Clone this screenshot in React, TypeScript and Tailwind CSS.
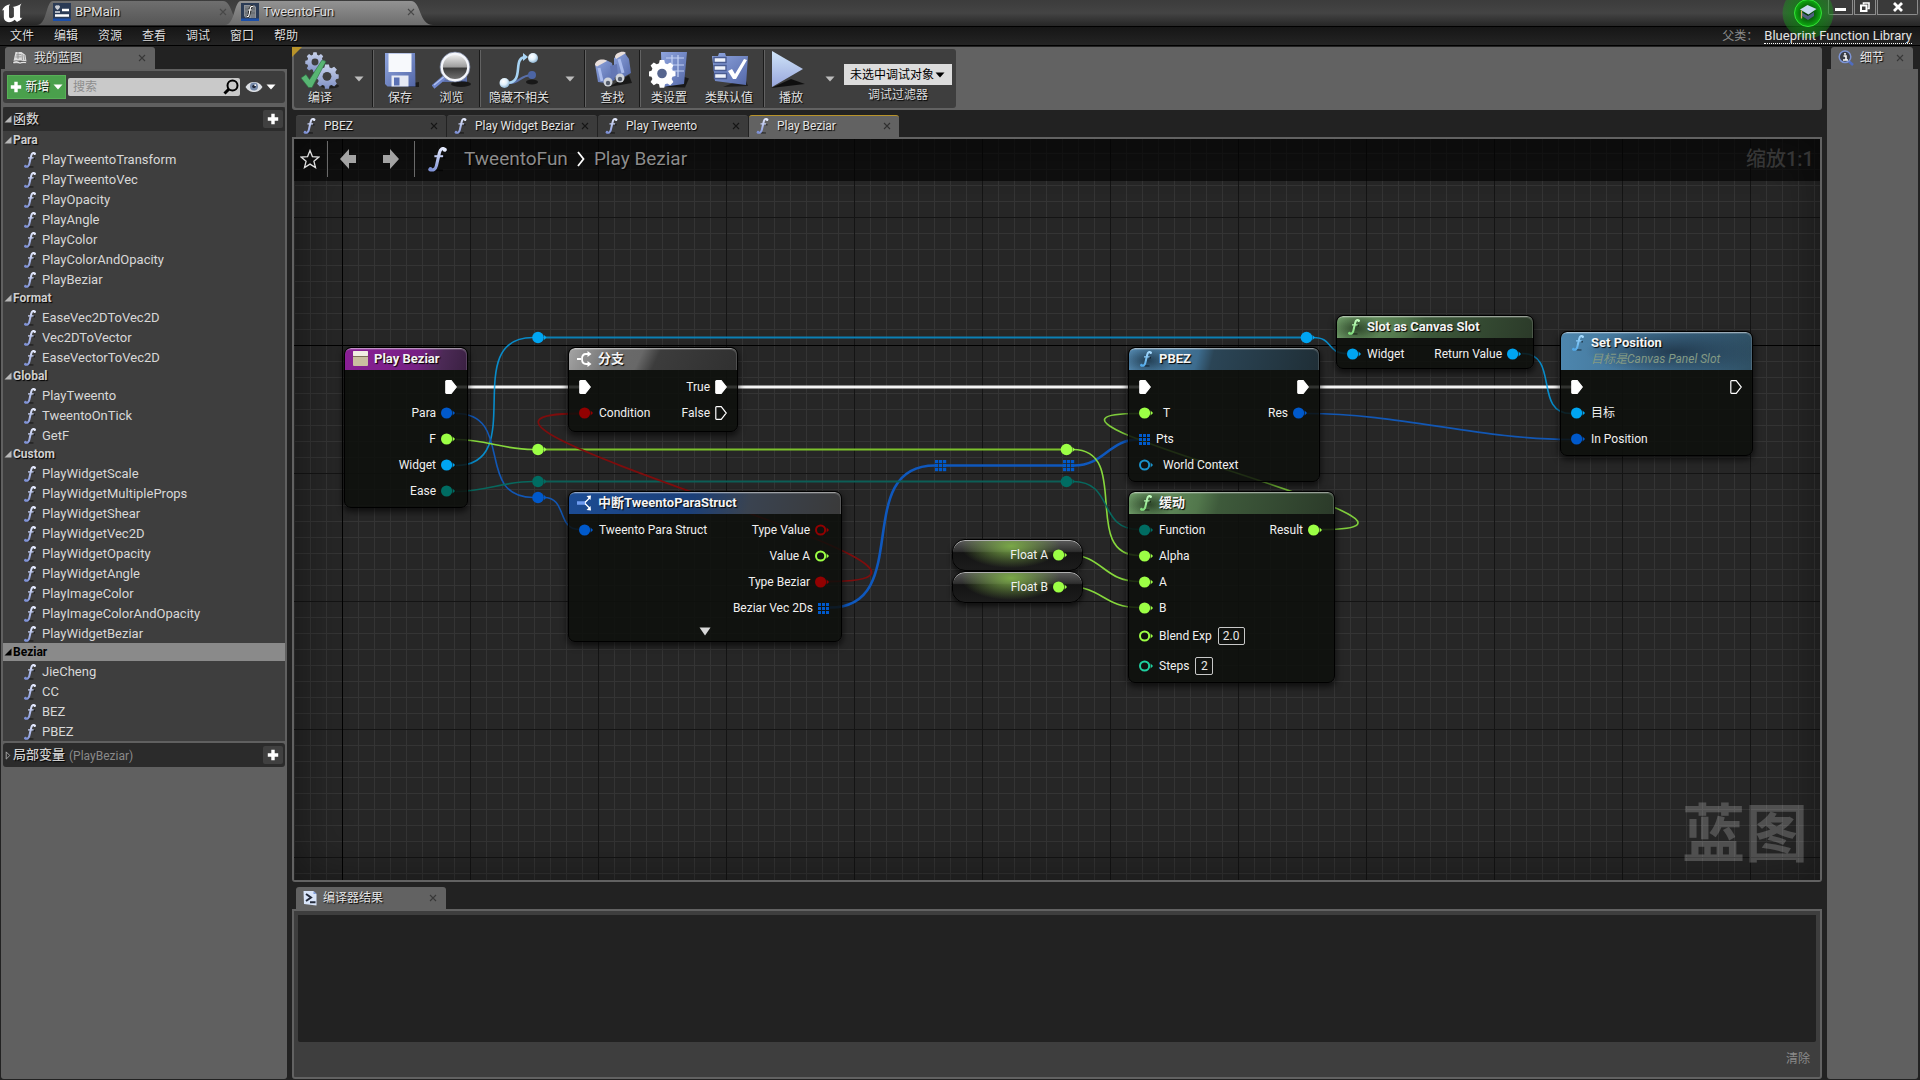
import type { ReactNode } from "react";

const SHADOW = "[text-shadow:1px_1px_1px_#000]";

/* ---------- icons ---------- */

function FIcon({ className = "h-4 w-3", from = "#e8edff", to = "#7d90d6" }: { className?: string; from?: string; to?: string }) {
  const id = "f" + from.slice(1) + to.slice(1);
  return (
    <svg viewBox="0 0 12 16" className={className + " shrink-0"} fill="none" aria-hidden="true">
      <defs>
        <linearGradient id={id} x1="0" y1="0" x2="0" y2="16" gradientUnits="userSpaceOnUse">
          <stop offset="0" stopColor={from} />
          <stop offset="1" stopColor={to} />
        </linearGradient>
      </defs>
      <path d="M4.5 14.8l5 .2M9 6.6l2 .3" stroke="#000" strokeOpacity=".6" strokeWidth="1.2" />
      <path d="M10.9 1.6C9.4.3 7.8 1.2 7.2 3.8L5.3 12c-.5 2.1-1.9 3.2-4.2 2.5" stroke={`url(#${id})`} strokeWidth="2" strokeLinecap="round" />
      <path d="M4 5.9h5.6" stroke={`url(#${id})`} strokeWidth="1.3" />
      <circle cx="10.6" cy="2" r="1.1" fill={from} />
      <circle cx="1.5" cy="14" r="1.2" fill={to} />
    </svg>
  );
}

const Close = ({ className = "" }: { className?: string }) => (
  <svg viewBox="0 0 8 8" className={"h-2 w-2 shrink-0 " + className} aria-hidden="true">
    <path d="M1 1l6 6M7 1L1 7" stroke="currentColor" strokeWidth="1.1" />
  </svg>
);

const Caret = ({ className = "" }: { className?: string }) => (
  <svg viewBox="0 0 10 6" className={"h-[6px] w-[10px] shrink-0 " + className} aria-hidden="true">
    <path d="M.5.5h9L5 5.5z" fill="currentColor" />
  </svg>
);

const Plus = () => (
  <svg viewBox="0 0 12 12" className="h-3 w-3 shrink-0" aria-hidden="true">
    <path d="M4.3.8h3.4v3.5h3.500v3.400H7.700v3.500H4.300V7.700H.8V4.300h3.500z" fill="#fff" />
  </svg>
);

const Logo = () => (
  <svg viewBox="0 0 24 22" className="mt-[3px] h-[20px] w-[24px] shrink-0" aria-label="Unreal">
    <path
      d="M1 8.500C2.500 4.500 5.500 1.800 10 1.300c-1 1-1.300 2-1.300 3.200v10c0 1.400.8 2.200 2 2.200 1.500 0 2.600-.8 3.400-1.800V6c0-1-.4-1.500-1.400-1.700C16 3.800 20 2.500 22.500.5c-1 1.600-1.600 2.600-1.600 4.500v10c0 1 .5 1.500 1.200 1.500.5 0 1-.3 1.400-.7-1.200 2.600-3.500 4.200-6 5l-2.600-2.400c-1.700 1.700-3.600 2.700-6.200 2.700C5.500 21.100 3 19 3 15.800V8.500c0-.8-.8-1-2 0z"
      fill="#fff"
    />
  </svg>
);

const WidgetIcon = () => (
  <svg viewBox="0 0 18 18" className="h-[18px] w-[18px] shrink-0" aria-hidden="true">
    <rect width="18" height="18" fill="#2b3b55" />
    <rect y="15.500" width="18" height="2.500" fill="#1c4fa8" />
    <path d="M4.500 2.500c1.200-1 2.500.2 2.500 1.300C7 5.300 4.500 7 4.500 7S2 5.300 2 3.800c0-1.100 1.400-2.300 2.500-1.300z" fill="#c9cdd4" />
    <path d="M9 7h7M2 12.500h14" stroke="#fff" strokeWidth="2.600" />
    <path d="M2 9h5" stroke="#dfe3ea" strokeWidth="1.600" />
  </svg>
);

const LibraryIcon = () => (
  <svg viewBox="0 0 18 18" className="h-[18px] w-[18px] shrink-0" aria-hidden="true">
    <rect width="18" height="18" fill="#2b3b55" />
    <rect y="15.500" width="18" height="2.500" fill="#1c4fa8" />
    <path d="M3 2h10l2 2v11H5l-2-2z" fill="#8e9298" />
    <path d="M5 3v11M7 3v11M13 4v11M11 4v11M4 6h10M4 10h10" stroke="#5c6066" strokeWidth=".8" />
    <path d="M12 3.500c-2-.8-2.600 1-3 3L8 12c-.3 1.400-1 2-2.300 1.600M7 7h4" stroke="#111" strokeWidth="2.600" fill="none" />
    <path d="M12 3.500c-2-.8-2.600 1-3 3L8 12c-.3 1.400-1 2-2.300 1.600M7 7h4" stroke="#fff" strokeWidth="1.200" fill="none" />
  </svg>
);

const BookIcon = () => (
  <svg viewBox="0 0 16 14" className="h-[14px] w-4 shrink-0" aria-hidden="true">
    <path d="M1.500 10l2-9h6l4 3 1 6.500-6-1z" fill="#dcdcdc" />
    <path d="M4 4l5-.5M3.500 6l6-.2M6 1v7M10 3l.5 6M12 4l.8 5" stroke="#7c7c7c" strokeWidth=".7" />
    <path d="M1 10.500c2.500-1 5-.8 7 .8 2-1 4-1.200 6.500-.3v1.700c-2.500-.7-4.500-.5-6.500.3-2-1-4.500-1.200-7-.3z" fill="#f2f2f2" stroke="#222" strokeWidth=".4" />
  </svg>
);

const SearchIcon = () => (
  <svg viewBox="0 0 16 16" className="h-4 w-4 shrink-0" fill="none" aria-hidden="true">
    <circle cx="9.500" cy="6.500" r="5" stroke="#000" strokeWidth="2" />
    <path d="M6 10l-4.500 4.500" stroke="#000" strokeWidth="3" />
  </svg>
);

const EyeIcon = () => (
  <svg viewBox="0 0 18 12" className="h-3 w-[18px] shrink-0" aria-hidden="true">
    <path d="M.5 6C3 2 6 1 9 1s6 1 8.500 5C15 10 12 11 9 11S3 10 .5 6z" fill="#dcdfe4" />
    <circle cx="9" cy="5.500" r="4" fill="#7488a8" />
    <circle cx="9" cy="5.500" r="1.800" fill="#20283a" />
    <circle cx="10.200" cy="4.200" r=".9" fill="#fff" />
  </svg>
);

const GEAR =
  "M-1.500-8h3l.5 2.200 1.500.6 2-1.200 2.100 2.100-1.200 2 .6 1.500L9-.3v3l-2 .5-.6 1.500 1.200 2-2.100 2.100-2-1.200-1.500.6-.5 2.300h-3l-.5-2.300-1.500-.6-2 1.200-2.100-2.100 1.200-2-.6-1.500L-9 2.700v-3l2-.5.6-1.500-1.200-2 2.100-2.100 2 1.200 1.500-.6z";

const Defs = () => (
  <svg className="absolute h-0 w-0" aria-hidden="true">
    <defs>
      <linearGradient id="steel" x1="0" y1="0" x2="0" y2="1">
        <stop offset="0" stopColor="#c9d3ec" />
        <stop offset="1" stopColor="#7f90c4" />
      </linearGradient>
      <linearGradient id="blue" x1="0" y1="0" x2="1" y2="1">
        <stop offset="0" stopColor="#8fa5de" />
        <stop offset="1" stopColor="#5468a8" />
      </linearGradient>
      <linearGradient id="ice" x1="0" y1="0" x2="0" y2="1">
        <stop offset="0" stopColor="#cfe4f8" />
        <stop offset="1" stopColor="#98a6dc" />
      </linearGradient>
      <linearGradient id="lens" x1="0" y1="0" x2="0" y2="1">
        <stop offset="0" stopColor="#f4f4f4" />
        <stop offset=".5" stopColor="#9c9c9c" />
        <stop offset=".54" stopColor="#3a3a3a" />
        <stop offset="1" stopColor="#777" />
      </linearGradient>
      <radialGradient id="ball" cx=".4" cy=".35" r=".7">
        <stop offset="0" stopColor="#fff" />
        <stop offset=".5" stopColor="#dff0fc" />
        <stop offset="1" stopColor="#7fa8c8" />
      </radialGradient>
    </defs>
  </svg>
);

const Big = ({ children }: { children: ReactNode }) => (
  <svg viewBox="0 0 40 40" className="h-10 w-10" fill="none" aria-hidden="true">
    {children}
  </svg>
);

const CompileIcon = () => (
  <Big>
    <ellipse cx="30" cy="36" rx="9" ry="2.500" fill="#000" opacity=".5" />
    <g transform="translate(15 11) scale(1.080)">
      <path d={GEAR} fill="url(#steel)" />
      <circle cx="0" cy="1" r="3.200" fill="#3e3e3e" />
    </g>
    <g transform="translate(27 25) scale(1.300)">
      <path d={GEAR} fill="url(#steel)" />
      <circle cx="0" cy="1" r="3.400" fill="#3e3e3e" />
    </g>
    <path d="M1 28l5-3.500 3.500 5L22 10l4 1.500L12 37.500H8.500z" fill="#58b573" stroke="#2c6b40" strokeWidth=".6" />
  </Big>
);

const SaveIcon = () => (
  <Big>
    <path d="M10 37h29v-5z" fill="#000" opacity=".55" />
    <path d="M5 3h30l.5 33.500H7.500L5 34z" fill="url(#blue)" />
    <path d="M8.500 3.500h23V22h-23z" fill="#f7f9fc" />
    <path d="M11.500 25.500h17v11h-17z" fill="#e6eaf4" />
    <path d="M14 27.500h5.500v8H14z" fill="#5a71b4" />
  </Big>
);

const BrowseIcon = () => (
  <Big>
    <path d="M11 8h24v24H11z" fill="#5b6ea8" />
    <ellipse cx="29" cy="34" rx="10" ry="3" fill="#000" opacity=".6" />
    <path d="M14 26L1 37" stroke="#6f86cc" strokeWidth="4.500" />
    <path d="M13 26L2 35" stroke="#b6c5f2" strokeWidth="1.200" />
    <circle cx="23" cy="17" r="13.500" fill="url(#lens)" stroke="#f4f6fb" strokeWidth="2.800" />
    <circle cx="23" cy="17" r="15" stroke="#6e7a96" strokeWidth=".7" />
  </Big>
);

const HideIcon = () => (
  <Big>
    <ellipse cx="33" cy="32" rx="6" ry="2.500" fill="#000" opacity=".6" />
    <path d="M10 33c11 0 10-7 22-8" stroke="#5a70a8" strokeWidth="2" />
    <circle cx="33" cy="25" r="4" fill="#4c65a4" />
    <path d="M8 33c18 0 5-25 18-26" stroke="#a8d4f4" strokeWidth="2.600" />
    <path d="M24 3l5 4-5 4z" fill="#a8d4f4" />
    <circle cx="34" cy="8" r="5" fill="url(#ball)" />
    <circle cx="5.500" cy="33" r="5" fill="url(#ball)" />
  </Big>
);

const FindIcon = () => (
  <Big>
    <path d="M16 37l23-4-3-8z" fill="#000" opacity=".6" />
    <path d="M2 14l11-4 6 3 3 17-9 3-8-1z" fill="url(#blue)" />
    <path d="M21 8l10-6 5 7 2 14-9 5-8-4z" fill="url(#blue)" />
    <path d="M2 15c0-5 8-7 12-4l-10 5.500zM22 7c0-4 8-7 11-4l-10 6z" fill="#e9dfdc" />
    <path d="M6 18l3 13M26 9l4 14" stroke="#a9bbec" strokeWidth="3" />
    <path d="M17 16l7-2 1 12-6 3z" fill="#6477b4" />
    <circle cx="15" cy="32" r="4.500" fill="#cfd3da" />
    <circle cx="15" cy="33" r="2.200" fill="#555d6c" />
    <circle cx="27" cy="28" r="4.500" fill="#cfd3da" />
    <circle cx="27" cy="29" r="2.200" fill="#555d6c" />
  </Big>
);

const SettingsIcon = () => (
  <Big>
    <path d="M16 37l20 .5 4-9-6-2z" fill="#000" opacity=".6" />
    <path d="M12 2h26l-3 32-22 3z" fill="url(#blue)" />
    <path d="M17 8h18M17 15h18M22 21h13M23 5v17M29 5v22" stroke="#c4d2f4" strokeWidth="1.200" />
    <g transform="translate(13 22) scale(1.500)">
      <path d={GEAR} fill="#fff" />
      <circle cx="0" cy="1" r="3.200" fill="#56658e" />
    </g>
  </Big>
);

const DefaultsIcon = () => (
  <Big>
    <path d="M14 37l25-1-3-8z" fill="#000" opacity=".5" />
    <path d="M3 6h6l1-3h6l1 3h22l-2 29L6 31z" fill="url(#blue)" />
    <path d="M5 7.500h12v5H5zM5 15.500h12v5H5zM5.500 23.500h12v5h-12z" fill="#eef2fb" stroke="#4a5c92" strokeWidth="1.400" />
    <path d="M19 21l4-2 3 5 9-15 3 1-11 19h-3z" fill="#fff" />
  </Big>
);

const PlayIcon = () => (
  <Big>
    <path d="M0 38l34-4-14-5z" fill="#000" opacity=".75" />
    <path d="M1 1l31 18L1 37z" fill="url(#ice)" />
  </Big>
);

const DetailsIcon = () => (
  <svg viewBox="0 0 16 16" className="h-4 w-4 shrink-0" fill="none" aria-hidden="true">
    <path d="M10.500 11l4.500 4" stroke="#4f6cc0" strokeWidth="2.600" />
    <circle cx="7" cy="6.800" r="5.800" fill="#3b3f48" stroke="#7c94d6" strokeWidth="1.500" />
    <path d="M7 3v1.800M5.500 6H8v4M5 10h5" stroke="#fff" strokeWidth="1.600" />
  </svg>
);

const TerminalIcon = () => (
  <svg viewBox="0 0 14 16" className="h-4 w-[14px] shrink-0" fill="none" aria-hidden="true">
    <path d="M.5 1h10l3 3v11.500L1 14z" fill="#d9e5fa" />
    <path d="M10.500 1v3h3z" fill="#7f9cdc" />
    <path d="M3 4l5 3.500L3 11M7 12.200h5.500" stroke="#232a3a" strokeWidth="2" />
  </svg>
);

/* ---------- graph parts ---------- */

const C = {
  float: "#9cff45",
  struct: "#0059cb",
  object: "#00a5f2",
  byte: "#006c62",
  int: "#1fd0a0",
  bool: "#920101",
};

type PinKind = "exec" | "execOpen" | "dot" | "ring" | "array";

const isExec = (k?: PinKind) => k === "exec" || k === "execOpen";

function Pin({ kind, color = "#fff" }: { kind: PinKind; color?: string }) {
  if (isExec(kind))
    return (
      <svg viewBox="0 0 12 14" className="h-[14px] w-3 shrink-0" aria-hidden="true">
        <path d="M.8 1.300Q.8.7 1.500.7H6.200L11.300 7 6.200 13.300H1.500Q.8 13.300.8 12.700z" fill={kind === "exec" ? "#fff" : "none"} stroke="#fff" strokeWidth="1.200" />
      </svg>
    );
  if (kind === "array")
    return (
      <svg viewBox="0 0 11 11" className="h-[11px] w-[11px] shrink-0" aria-hidden="true">
        {[0, 4, 8].map((y) => [0, 4, 8].map((x) => <rect key={x + "," + y} x={x} y={y} width="3" height="3" fill={color} />))}
      </svg>
    );
  return (
    <svg viewBox="0 0 14 12" className="h-3 w-[14px] shrink-0" aria-hidden="true">
      {kind === "dot" ? <circle cx="5.600" cy="6" r="5.600" fill={color} /> : <circle cx="5.600" cy="6" r="4.600" fill="none" stroke={color} strokeWidth="2" />}
      <path d="M11.600 3.500L14 6l-2.400 2.500z" fill={color} />
    </svg>
  );
}

type P = { label?: string; kind: PinKind; color?: string; value?: string; wide?: boolean };

function Row({ left, right, tall }: { left?: P; right?: P; tall?: boolean }) {
  const exec = isExec(right?.kind);
  return (
    <div className={"flex items-center justify-between pl-[10px] " + (tall ? "h-[30px] " : "h-[26px] ") + (exec ? "pr-[10px]" : "pr-[12px]")}>
      {left ? (
        <div className={"flex items-center " + (left.wide ? "gap-[10px]" : "gap-[6px]")}>
          <Pin kind={left.kind} color={left.color} />
          {left.value ? (
            <label className="flex items-center gap-[6px]">
              {left.label}
              <input
                defaultValue={left.value}
                size={1}
                className={(left.value.length > 1 ? "w-[27px]" : "w-[18px]") + " h-[18px] rounded-[2px] border border-[#c8c8c8] bg-transparent text-center text-[12px] text-[#e8e8e8] outline-none"}
              />
            </label>
          ) : (
            left.label && <span>{left.label}</span>
          )}
        </div>
      ) : (
        <span />
      )}
      {right && (
        <div className="flex items-center gap-[5px]">
          {right.label && <span>{right.label}</span>}
          <Pin kind={right.kind} color={right.color} />
        </div>
      )}
    </div>
  );
}

function GNode({ at, head, icon, title, sub, body, children }: { at: string; head: string; icon: ReactNode; title: string; sub?: string; body: string; children: ReactNode }) {
  return (
    <section className={"absolute overflow-hidden rounded-[7px] border border-black bg-[#0d0f0c]/85 text-[12px] leading-4 text-[#f0f0f0] shadow-[0_3px_6px_1px_rgba(0,0,0,0.6)] " + at}>
      <header className={"flex gap-[6px] rounded-t-[6px] border-t border-white/50 pl-[8px] shadow-[inset_-1px_1px_0_rgba(255,255,255,0.15)] " + (sub ? "h-[38px] pt-[2px] " : "h-[22px] items-center pb-[2px] ") + head}>
        {icon}
        <div className="whitespace-nowrap">
          <h3 className={"text-[13px] font-bold text-[#f4f4f4] " + SHADOW}>{title}</h3>
          {sub && <p className="text-[12px] leading-4 text-[#849a84] italic">{sub}</p>}
        </div>
      </header>
      <div className={body}>{children}</div>
    </section>
  );
}

const FloatVar = ({ at, label }: { at: string; label: string }) => (
  <section className={"absolute flex h-8 w-[131px] items-center justify-end gap-[5px] rounded-[13px] border border-black bg-[radial-gradient(ellipse_50px_22px_at_45%_20%,#7aa848,transparent),linear-gradient(#5c5c5c,#2e2e2e_38%,#141414_42%,#1c1c1c)] pr-[15px] text-[12px] text-[#f0f0f0] shadow-[inset_0_1px_0_#b0b0b0,0_3px_5px_rgba(0,0,0,0.6)] " + at}>
    <span>{label}</span>
    <Pin kind="dot" color={C.float} />
  </section>
);

const Knot = ({ x, y, c }: { x: number; y: number; c: string }) => (
  <g fill={c}>
    <circle cx={x} cy={y} r="5.800" />
    <path d={`M${x + 6} ${y - 2.500}l2.500 2.500-2.500 2.500z`} />
  </g>
);

const ArrayKnot = ({ x, y }: { x: number; y: number }) => (
  <g fill={C.struct}>
    {[-6, -2, 2].map((dy) => [-6, -2, 2].map((dx) => <rect key={dx + "," + dy} x={x + dx} y={y + dy} width="3.200" height="3.200" />))}
  </g>
);

function Wires() {
  return (
    <svg className="absolute inset-0 h-full w-full" fill="none" aria-hidden="true">
      <defs>
        <pattern id="minor" width="16" height="16" patternUnits="userSpaceOnUse" x="0" y="14">
          <path d="M0 .5h16M.5 0v16" stroke="#343434" />
        </pattern>
        <pattern id="major" width="128" height="128" patternUnits="userSpaceOnUse" x="48" y="78">
          <path d="M0 .5h128M.5 0v128" stroke="#141414" />
        </pattern>
      </defs>
      <rect width="100%" height="100%" fill="#262626" />
      <rect width="100%" height="100%" fill="url(#minor)" />
      <rect width="100%" height="100%" fill="url(#major)" />
      <path d="M0 206.500h4000M48.500 0v4000" stroke="#000" strokeWidth="1" />
      <g transform="translate(-294 -139)" strokeWidth="1.600">
        <path d="M455 387H580M726 387H1140M1307 387H1572" stroke="#f4f4f4" strokeWidth="3" />
        <path d="M456 465.500C530 465.500 458 337.500 533 337.500" stroke={C.object} opacity=".8" />
        <path d="M544 337.500H1301" stroke="#0b7fb4" strokeWidth="2" />
        <path d="M1313 337.500C1334 337.500 1326 353.500 1347 353.500M1522 353.500C1560 353.500 1533 413.500 1571 413.500" stroke={C.object} opacity=".8" />
        <path d="M456 413.500C515 413.500 474 497.500 533 497.500M544 497.500C567 497.500 557 529.500 579 529.500" stroke="#1257b4" />
        <path d="M1307 413.500C1400 413.500 1480 439.500 1571 439.500" stroke="#1257b4" />
        <path d="M830 607.500C915 607.500 850 465.500 935 465.500M946 465.500H1063M1074 465.500C1105 465.500 1108 439.500 1139 439.500" stroke="#0f58bd" strokeWidth="2.600" />
        <path d="M456 439.500C486 439.500 503 449.500 533 449.500M1073 449.500C1132 449.500 1080 555.500 1139 555.500M1067 554.500C1103 554.500 1103 581.500 1139 581.500M1067 586.500C1103 586.500 1103 607.500 1139 607.500" stroke="#86d83c" />
        <path d="M544 449.500H1061" stroke="#7cc12c" strokeWidth="2.200" />
        <path d="M1322 529.500C1497 529.500 968 413.500 1139 413.500" stroke="#7fcc3c" />
        <path d="M456 491.500C486 491.500 503 481.500 533 481.500M1073 481.500C1115 481.500 1097 529.500 1139 529.500" stroke="#07685e" />
        <path d="M544 481.500H1061" stroke="#0c5e56" strokeWidth="2.200" />
        <path d="M828 581.500C1045 581.500 370 413.500 579 413.500" stroke="#7e0d0d" strokeWidth="1.800" />
        <g stroke="none">
          <Knot x={538} y={337.5} c={C.object} />
          <Knot x={1306.5} y={337.5} c={C.object} />
          <Knot x={538} y={449.5} c={C.float} />
          <Knot x={1066.5} y={449.5} c={C.float} />
          <Knot x={538} y={481.5} c={C.byte} />
          <Knot x={1066.5} y={481.5} c={C.byte} />
          <Knot x={538} y={497.5} c={C.struct} />
          <ArrayKnot x={941} y={466} />
          <ArrayKnot x={1069} y={466} />
        </g>
      </g>
    </svg>
  );
}

const FBlue = () => <FIcon className="ml-[2px] h-4 w-[14px]" from="#a8dcff" to="#4fa8e8" />;
const FGreen = () => <FIcon className="ml-[2px] h-4 w-[14px]" from="#c4ffc0" to="#7edc7a" />;

const BLUE_HEAD =
  "bg-[radial-gradient(ellipse_26px_14px_at_10%_55%,rgba(16,34,48,0.7),transparent),linear-gradient(105deg,#5489b0,#3d6c8e_36%,#2b4556_44%,#1f2e36)]";
const GREEN_HEAD =
  "bg-[radial-gradient(ellipse_26px_14px_at_10%_55%,rgba(22,40,20,0.7),transparent),linear-gradient(105deg,#6f9c68,#52774c_34%,#3e5a3b_44%,#2b3a29)]";

function Graph() {
  return (
    <div className="relative min-h-0 flex-1 overflow-hidden">
      <Wires />
      <GNode
        at="left-[50px] top-[208px] w-[124px]"
        head="bg-[linear-gradient(105deg,#8a1f96,#762084_60%,#4c2a56_78%,#3a2042)]"
        title="Play Beziar"
        body="pt-[4px] pb-[3px]"
        icon={
          <svg viewBox="0 0 15 15" className="h-[15px] w-[15px] shrink-0" aria-hidden="true">
            <rect width="15" height="15" rx="1" fill="#c9bfa0" />
            <rect width="15" height="5" rx="1" fill="#f1eee4" />
            <path d="M0 5.500h15" stroke="#7c6f58" />
          </svg>
        }
      >
        <Row right={{ kind: "exec" }} />
        <Row right={{ label: "Para", kind: "dot", color: C.struct }} />
        <Row right={{ label: "F", kind: "dot", color: C.float }} />
        <Row right={{ label: "Widget", kind: "dot", color: C.object }} />
        <Row right={{ label: "Ease", kind: "dot", color: C.byte }} />
      </GNode>

      <GNode
        at="left-[274px] top-[208px] w-[170px]"
        head="bg-[linear-gradient(115deg,#a4a4a4,#6a6a6a_30%,#686868_42%,#3c3c3c_52%,#303030)]"
        title="分支"
        body="pt-[4px] pb-[5px]"
        icon={
          <svg viewBox="0 0 15 16" className="h-4 w-[15px] shrink-0" fill="none" aria-hidden="true">
            <path d="M0 8h4M12 3H9C6 3 5 5 5 8s1 5 4 5h3" stroke="#fff" strokeWidth="1.800" />
            <path d="M10.500 0l4 3-4 3zM10.500 10l4 3-4 3z" fill="#fff" />
          </svg>
        }
      >
        <Row left={{ kind: "exec" }} right={{ label: "True", kind: "exec" }} />
        <Row left={{ label: "Condition", kind: "dot", color: C.bool }} right={{ label: "False", kind: "execOpen" }} />
      </GNode>

      <GNode
        at="left-[274px] top-[352px] w-[274px]"
        head="bg-[linear-gradient(105deg,#1c4c94,#1b3f78_45%,#3a4350_66%,#3a3a3a)]"
        title="中断TweentoParaStruct"
        body="pt-[3px]"
        icon={
          <svg viewBox="0 0 15 16" className="h-4 w-[15px] shrink-0" fill="none" aria-hidden="true">
            <path d="M0 8h9" stroke="#6f9cf0" strokeWidth="3.500" />
            <path d="M8 7.500L12.500 3M8 8.500l4.500 4.500" stroke="#fff" strokeWidth="1.300" />
            <path d="M9.500 1l4.500-.5-.5 4.500zM9.500 15l4.500.5-.5-4.500z" fill="#fff" />
          </svg>
        }
      >
        <Row left={{ label: "Tweento Para Struct", kind: "dot", color: C.struct }} right={{ label: "Type Value", kind: "ring", color: C.bool }} />
        <Row right={{ label: "Value A", kind: "ring", color: C.float }} />
        <Row right={{ label: "Type Beziar", kind: "dot", color: C.bool }} />
        <Row right={{ label: "Beziar Vec 2Ds", kind: "array", color: C.struct }} />
        <button className="flex h-5 w-full items-center justify-center" aria-label="展开">
          <svg viewBox="0 0 12 9" className="h-[9px] w-3" aria-hidden="true">
            <path d="M.5.5h11L6 8.500z" fill="#d8d8d8" />
          </svg>
        </button>
      </GNode>

      <GNode at="left-[834px] top-[208px] w-[192px]" head={BLUE_HEAD} title="PBEZ" body="pt-[4px] pb-[3px]" icon={<FBlue />}>
        <Row left={{ kind: "exec" }} right={{ kind: "exec" }} />
        <Row left={{ label: "T", kind: "dot", color: C.float, wide: true }} right={{ label: "Res", kind: "dot", color: C.struct }} />
        <Row left={{ label: "Pts", kind: "array", color: C.struct }} />
        <Row left={{ label: "World Context", kind: "ring", color: "#1a94cc", wide: true }} />
      </GNode>

      <GNode at="left-[834px] top-[352px] w-[207px]" head={GREEN_HEAD} title="缓动" body="pt-[3px] pb-[1px]" icon={<FGreen />}>
        <Row left={{ label: "Function", kind: "dot", color: C.byte }} right={{ label: "Result", kind: "dot", color: C.float }} />
        <Row left={{ label: "Alpha", kind: "dot", color: C.float }} />
        <Row left={{ label: "A", kind: "dot", color: C.float }} />
        <Row left={{ label: "B", kind: "dot", color: C.float }} />
        <Row tall left={{ label: "Blend Exp", kind: "ring", color: C.float, value: "2.0" }} />
        <Row tall left={{ label: "Steps", kind: "ring", color: C.int, value: "2" }} />
      </GNode>

      <GNode at="left-[1042px] top-[176px] w-[198px]" head={GREEN_HEAD} title="Slot as Canvas Slot" body="pt-[3px] pb-[1px]" icon={<FGreen />}>
        <Row left={{ label: "Widget", kind: "dot", color: C.object }} right={{ label: "Return Value", kind: "dot", color: C.object }} />
      </GNode>

      <GNode
        at="left-[1266px] top-[192px] w-[193px]"
        head="bg-[radial-gradient(ellipse_90px_24px_at_60%_50%,#233c50,transparent),linear-gradient(90deg,#4d86ae,#3d6a8a_60%,#2f5064)]"
        title="Set Position"
        sub="目标是Canvas Panel Slot"
        body="pt-[4px] pb-[3px]"
        icon={<FBlue />}
      >
        <Row left={{ kind: "exec" }} right={{ kind: "execOpen" }} />
        <Row left={{ label: "目标", kind: "dot", color: C.object }} />
        <Row left={{ label: "In Position", kind: "dot", color: C.struct }} />
      </GNode>

      <FloatVar at="left-[658px] top-[400px]" label="Float A" />
      <FloatVar at="left-[658px] top-[432px]" label="Float B" />

      <div className="pointer-events-none absolute inset-0 shadow-[inset_0_0_50px_rgba(0,0,0,0.45)]" />

      <nav className="absolute inset-x-0 top-0 flex h-[42px] items-center bg-black/60 pr-[6px] pb-[2px] text-[19px] text-[#8c8c8c]">
        <button className="mr-[7px] ml-[6px]" aria-label="收藏">
          <svg viewBox="0 0 20 20" className="h-5 w-5" fill="none" aria-hidden="true">
            <path d="M10 1.500l2.400 6.100 6.500.4-5 4.200 1.600 6.400-5.500-3.500-5.500 3.500 1.600-6.400-5-4.200 6.500-.4z" stroke="#e0e0e0" strokeWidth="1.300" />
          </svg>
        </button>
        <span className="h-[36px] w-px bg-[#6a6a6a]" />
        <button className="ml-3" aria-label="后退">
          <svg viewBox="0 0 17 22" className="h-[22px] w-[17px]" aria-hidden="true">
            <path d="M0 11L9 1v6h7v8H9v6z" fill="#a4a4a4" />
          </svg>
        </button>
        <button className="ml-[25px]" aria-label="前进">
          <svg viewBox="0 0 17 22" className="h-[22px] w-[17px]" aria-hidden="true">
            <path d="M17 11L8 1v6H1v8h7v6z" fill="#a4a4a4" />
          </svg>
        </button>
        <span className="ml-[15px] h-[36px] w-px bg-[#6a6a6a]" />
        <FIcon className="ml-[13px] h-[25px] w-[19px]" />
        <a href="#library" className={"ml-[17px] " + SHADOW}>TweentoFun</a>
        <svg viewBox="0 0 8 16" className="mx-[9px] h-4 w-2" fill="none" aria-hidden="true">
          <path d="M1 1l5.500 7L1 15" stroke="#fff" strokeWidth="1.800" />
        </svg>
        <span className={SHADOW}>Play Beziar</span>
        <span className="ml-auto text-[20px] font-medium text-[#363636]">缩放1:1</span>
      </nav>

      <div className="pointer-events-none absolute right-[12px] bottom-[10px] text-[63px] leading-[70px] font-bold text-white/20">蓝图</div>
    </div>
  );
}

/* ---------- chrome ---------- */

function TitleTab({ icon, label, active }: { icon: ReactNode; label: string; active?: boolean }) {
  return (
    <button
      className={
        "flex h-[25px] w-[208px] items-center pr-[18px] pb-px pl-4 text-left text-[13px] text-[#dedede] [clip-path:path('M0_25C10_25_9_1_16_1H186C196_1_194_25_208_25Z')] " +
        (active ? "-ml-5 bg-linear-to-b from-[#949494] to-[#6e6e6e]" : "bg-linear-to-b from-[#707070] to-[#565656]")
      }
    >
      {icon}
      <span className={"ml-1 flex-1 " + SHADOW}>{label}</span>
      <Close className="text-[#484848]" />
    </button>
  );
}

function PanelTab({ icon, label, width }: { icon: ReactNode; label: string; width: string }) {
  return (
    <button className={"flex h-[22px] items-center gap-[6px] rounded-t-[3px] bg-[#626262] pr-[9px] pl-[7px] text-left text-[12px] text-[#e6e6e6] " + width}>
      {icon}
      <span className={"flex-1 whitespace-nowrap " + SHADOW}>{label}</span>
      <Close className="text-[#383838]" />
    </button>
  );
}

function DocTab({ label, active }: { label: string; active?: boolean }) {
  return (
    <button
      className={
        "flex h-[22px] w-[150px] items-center gap-1 rounded-t-[3px] border-t pr-[8px] pb-px pl-[7px] text-left text-[12px] text-[#e4e4e4] " +
        (active ? "border-[#b8932a] bg-[#626262]" : "border-[#454545] bg-[#3b3b3b]")
      }
    >
      <FIcon className="h-4 w-[13px]" />
      <span className={"flex-1 pl-1 whitespace-nowrap " + SHADOW}>{label}</span>
      <Close className={active ? "text-[#303030]" : "text-[#161616]"} />
    </button>
  );
}

function Tool({ icon, label, width }: { icon: ReactNode; label: string; width: string }) {
  return (
    <button className={"flex flex-col items-center gap-px pt-px text-[12px] leading-[14px] whitespace-nowrap text-[#e2e2e2] " + width}>
      {icon}
      <span className={SHADOW}>{label}</span>
    </button>
  );
}

const ToolMenu = ({ width, label }: { width: string; label: string }) => (
  <button className={"flex items-center justify-center text-[#bdbdbd] " + width} aria-label={label}>
    <Caret />
  </button>
);

const Sep = () => <span className="mx-px my-px w-[2px] border-l border-[#1a1a1a] bg-[#626262]" />;

const groups: { name: string; items: string[] }[] = [
  { name: "Para", items: ["PlayTweentoTransform", "PlayTweentoVec", "PlayOpacity", "PlayAngle", "PlayColor", "PlayColorAndOpacity", "PlayBeziar"] },
  { name: "Format", items: ["EaseVec2DToVec2D", "Vec2DToVector", "EaseVectorToVec2D"] },
  { name: "Global", items: ["PlayTweento", "TweentoOnTick", "GetF"] },
  {
    name: "Custom",
    items: ["PlayWidgetScale", "PlayWidgetMultipleProps", "PlayWidgetShear", "PlayWidgetVec2D", "PlayWidgetOpacity", "PlayWidgetAngle", "PlayImageColor", "PlayImageColorAndOpacity", "PlayWidgetBeziar"],
  },
  { name: "Beziar", items: ["JieCheng", "CC", "BEZ", "PBEZ"] },
];

const Expander = ({ dark }: { dark?: boolean }) => (
  <svg viewBox="0 0 8 8" className="h-2 w-2 shrink-0" aria-hidden="true">
    <path d="M7.500.5v7h-7z" fill={dark ? "#000" : "#b8b8b8"} />
  </svg>
);

function Sidebar() {
  return (
    <aside className="flex w-[286px] shrink-0 flex-col">
      <div className="pl-1">
        <PanelTab icon={<BookIcon />} label="我的蓝图" width="w-[150px]" />
      </div>
      <div className="flex-1 rounded-b-[3px] bg-[#606060] p-[2px]">
        <div className="flex h-[32px] items-center rounded-[3px] bg-[#3d3d3d] pr-[9px] pl-1">
          <button className="flex h-6 w-[59px] items-center justify-center gap-[3px] border border-[#58b058] bg-[#4aa04c] text-[12px] text-white">
            <Plus />
            <span className={SHADOW}>新增</span>
            <Caret className="h-[6px] w-[9px]" />
          </button>
          <label className="ml-[2px] flex h-[18px] flex-1 items-center rounded-[2px] bg-[#c9c9c9] pr-px">
            <input placeholder="搜索" aria-label="搜索" className="w-0 flex-1 bg-transparent pl-[5px] text-[12px] text-[#222] outline-none placeholder:text-[#8d8d8d]" />
            <SearchIcon />
          </label>
          <button className="ml-[5px] flex items-center gap-[3px] text-white" aria-label="视图选项">
            <EyeIcon />
            <Caret className="h-[6px] w-[9px]" />
          </button>
        </div>
        <div className="mt-1 bg-[#3e3e3e]">
          <div className="flex h-6 items-center rounded-t-[3px] bg-[#2b2b2b] pr-[2px] pl-px">
            <Expander />
            <h2 className={"ml-px flex-1 text-[13px] font-medium text-[#cfcfcf] " + SHADOW}>函数</h2>
            <button className="flex h-[18px] w-5 items-center justify-center rounded-[2px] bg-[#404040]" aria-label="添加函数">
              <Plus />
            </button>
          </div>
          {groups.map((g) => (
            <section key={g.name}>
              <h3 className={"flex h-[18px] items-center gap-px pl-px text-[12px] font-bold " + (g.name === "Beziar" ? "bg-[#8a8a8a] text-black" : "text-[#cfcfcf] " + SHADOW)}>
                <Expander dark={g.name === "Beziar"} />
                {g.name}
              </h3>
              <ul>
                {g.items.map((i) => (
                  <li key={i} className="flex h-5 items-center gap-[6px] pt-[2px] pl-[21px] text-[13px] text-[#d8d8d8]">
                    <FIcon className="h-4 w-[12px]" />
                    {i}
                  </li>
                ))}
              </ul>
            </section>
          ))}
        </div>
        <div className="mt-[2px] flex h-6 items-center rounded-[3px] bg-[#2b2b2b] pr-[2px] pl-[2px]">
          <svg viewBox="0 0 6 10" className="h-[9px] w-[6px]" fill="none" aria-hidden="true">
            <path d="M1 1l4 4-4 4z" stroke="#b0b0b0" />
          </svg>
          <h2 className={"ml-[2px] text-[13px] font-medium text-[#cfcfcf] " + SHADOW}>局部变量</h2>
          <span className="ml-1 flex-1 pt-[2px] text-[12px] text-[#8a8a8a]">(PlayBeziar)</span>
          <button className="flex h-[18px] w-5 items-center justify-center rounded-[2px] bg-[#404040]" aria-label="添加局部变量">
            <Plus />
          </button>
        </div>
      </div>
    </aside>
  );
}

function Toolbar() {
  return (
    <div className="relative flex h-[63px] rounded-[3px] bg-[#626262] p-[2px]">
      <div className="flex rounded-[3px] bg-[#3e3e3e]">
        <Tool icon={<CompileIcon />} label="编译" width="w-[52px]" />
        <ToolMenu width="w-[25px]" label="编译选项" />
        <Sep />
        <Tool icon={<SaveIcon />} label="保存" width="w-[50px]" />
        <Tool icon={<BrowseIcon />} label="浏览" width="w-[53px]" />
        <Sep />
        <Tool icon={<HideIcon />} label="隐藏不相关" width="w-[74px]" />
        <ToolMenu width="w-[27px]" label="隐藏选项" />
        <Sep />
        <Tool icon={<FindIcon />} label="查找" width="w-[51px]" />
        <Sep />
        <Tool icon={<SettingsIcon />} label="类设置" width="w-[54px]" />
        <Tool icon={<DefaultsIcon />} label="类默认值" width="w-[66px]" />
        <Sep />
        <Tool icon={<PlayIcon />} label="播放" width="w-[50px]" />
        <ToolMenu width="w-[28px]" label="播放选项" />
        <label className="flex flex-col items-center pt-[15px] pr-1 text-[12px] text-[#dcdcdc]">
          <span className="relative flex items-center">
            <select className="h-[21px] w-[108px] appearance-none bg-[#dcdcdc] pl-[6px] text-[12px] text-black outline-none" defaultValue="none">
              <option value="none">未选中调试对象</option>
            </select>
            <Caret className="pointer-events-none absolute right-[7px] text-black" />
          </span>
          <span className={"mt-[2px] leading-4 " + SHADOW}>调试过滤器</span>
        </label>
      </div>
      <span className="absolute top-0 left-0 h-[10px] w-[10px] bg-[#b8932a] [clip-path:polygon(0_0,100%_0,0_100%)]" />
    </div>
  );
}

export default function App() {
  return (
    <div className="flex h-screen flex-col overflow-hidden bg-[#222222] font-[Roboto,'Noto_Sans_CJK_SC',sans-serif] text-[#dddddd]">
      <Defs />
      <header className="relative shrink-0">
        <div className="flex h-[26px] items-start bg-linear-to-b from-[#3c3c3c] via-[#444444] to-[#262626] pr-[2px]">
          <Logo />
          <div className="ml-[13px] flex">
            <TitleTab icon={<WidgetIcon />} label="BPMain" />
            <TitleTab icon={<LibraryIcon />} label="TweentoFun" active />
          </div>
          <div className="ml-auto flex h-[15px] gap-px">
            <button className="flex w-[25px] items-center justify-center rounded-bl-[2px] border border-t-0 border-[#8c8c8c] bg-[#3a3a3a]" aria-label="最小化">
              <span className="mt-1 h-[3px] w-[11px] bg-white" />
            </button>
            <button className="flex w-[22px] items-center justify-center border border-t-0 border-[#8c8c8c] bg-[#3a3a3a]" aria-label="还原">
              <svg viewBox="0 0 10 10" className="h-[10px] w-[10px]" fill="none" aria-hidden="true">
                <path d="M3.500 2.500V1H9v5.500H7.500" stroke="#fff" strokeWidth="1.600" />
                <rect x="1" y="3.500" width="5.500" height="5.500" stroke="#fff" strokeWidth="2" />
              </svg>
            </button>
            <button className="flex w-[41px] items-center justify-center rounded-br-[2px] border border-t-0 border-[#8c8c8c] bg-[#3a3a3a]" aria-label="关闭">
              <svg viewBox="0 0 10 10" className="h-[10px] w-[10px]" aria-hidden="true">
                <path d="M1 1l8 8M9 1L1 9" stroke="#fff" strokeWidth="2.800" />
              </svg>
            </button>
          </div>
        </div>
        <div className="flex h-5 items-center border-y border-black bg-linear-to-b from-[#161616] to-[#242424] pr-2 pl-[10px] text-[12px]">
          <nav className="flex gap-5">
            {["文件", "编辑", "资源", "查看", "调试", "窗口", "帮助"].map((m) => (
              <button key={m} className={SHADOW}>
                {m}
              </button>
            ))}
          </nav>
          <span className="ml-auto text-[#8a8a8a]">父类：</span>
          <a href="#parent" className="relative z-10 ml-[6px] border-b border-dotted border-white text-[13px] leading-[14px] text-[#e4e4e4]">
            Blueprint Function Library
          </a>
        </div>
        <svg viewBox="0 0 52 39" className="absolute top-0 right-[86px] h-[39px] w-[52px]" aria-hidden="true">
          <defs>
            <radialGradient id="halo">
              <stop offset=".4" stopColor="#0c8a10" />
              <stop offset="1" stopColor="#1a9a1c" stopOpacity=".55" />
            </radialGradient>
            <radialGradient id="orb">
              <stop offset=".2" stopColor="#043c06" />
              <stop offset="1" stopColor="#0fae12" />
            </radialGradient>
          </defs>
          <circle cx="26" cy="13" r="25.500" fill="url(#halo)" opacity=".75" />
          <circle cx="26" cy="13" r="13.500" fill="url(#orb)" stroke="#35e038" strokeWidth="1" />
          <path d="M20 12.500l6 3.500 6-4v4l-6 4-6-4z" fill="#4f5f80" />
          <path d="M18 9.500L25.500 5l9 4-8 5.500z" fill="#c6d8ee" />
          <path d="M19.500 10.500v8" stroke="#d8b070" strokeWidth="1.300" />
        </svg>
      </header>

      <div className="flex min-h-0 flex-1 gap-[5px] pt-px pr-[2px] pb-px pl-px">
        <Sidebar />

        <main className="flex min-w-0 flex-1 flex-col">
          <Toolbar />
          <div className="mt-[5px] flex gap-px pl-1">
            <DocTab label="PBEZ" />
            <DocTab label="Play Widget Beziar" />
            <DocTab label="Play Tweento" />
            <DocTab label="Play Beziar" active />
          </div>
          <div className="flex min-h-0 flex-1 flex-col rounded-b-[3px] border-2 border-[#626262]">
            <Graph />
          </div>
          <div className="mt-[5px] pl-1">
            <PanelTab icon={<TerminalIcon />} label="编译器结果" width="w-[150px]" />
          </div>
          <section className="flex h-[170px] shrink-0 flex-col rounded-b-[3px] border-2 border-[#626262] bg-[#3e3e3e] p-1">
            <div className="h-[127px] rounded-b-[2px] bg-[#222222]" />
            <button className="mt-[7px] mr-[6px] self-end text-[12px] leading-5 text-[#8a8a8a]">清除</button>
          </section>
        </main>

        <aside className="flex w-[91px] shrink-0 flex-col">
          <div className="pl-1">
            <PanelTab icon={<DetailsIcon />} label="细节" width="w-[82px]" />
          </div>
          <div className="flex-1 rounded-b-[3px] bg-[#606060]" />
        </aside>
      </div>
    </div>
  );
}
